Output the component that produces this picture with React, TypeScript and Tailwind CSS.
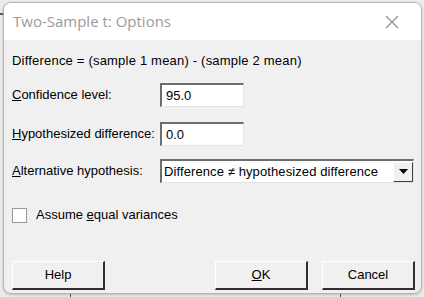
import React from "react";

const font = { fontFamily: '"Liberation Sans", Arial, sans-serif' };

function Btn({ children }: { children: React.ReactNode }) {
  return (
    <button className="w-[93px] h-[29px] bg-[#f0f0f0] border-t border-l border-t-white border-l-white border-r-2 border-b-2 border-r-[#303030] border-b-[#303030] text-[13px] text-black flex items-center justify-center">
      {children}
    </button>
  );
}

function Field({ value, w }: { value: string; w: string }) {
  return (
    <div className={`${w} h-[24px] bg-white border-t-2 border-l-2 border-t-[#6d6d6d] border-l-[#6d6d6d] border-b border-r border-b-[#e3e3e3] border-r-[#e3e3e3] flex items-center pl-[4px] text-[13px] text-black`}>
      {value}
    </div>
  );
}

export default function App() {
  return (
    <div className="relative w-[424px] h-[297px] bg-[#ececec] overflow-hidden pl-[3px] pt-[2px]" style={font}>
      <div className="absolute left-0 top-[13px] w-[4px] h-[2px] bg-[#5a5a5a]" />
      <div className="absolute left-[70px] top-[294px] w-[1px] h-[3px] bg-[#5a5a5a]" />
      <div className="absolute left-[340px] top-[294px] w-[1px] h-[3px] bg-[#5a5a5a]" />
      <div className="relative w-[419px] h-[292px] rounded-[8px] border border-[#b4b4b4] bg-[#f0f0f0] overflow-hidden shadow-[0_1px_3px_rgba(0,0,0,0.2)] flex flex-col">
        <div className="h-[37px] bg-white flex items-center justify-between pl-[9px] pr-[22px] shrink-0">
          <span className="text-[15px] text-[#9b9b9b]" style={{ fontFamily: '"Open Sans", "Noto Sans", sans-serif' }}>
            Two-Sample t: Options
          </span>
          <svg width="14" height="14" viewBox="0 0 14 14">
            <path d="M1 1 L13 13 M13 1 L1 13" stroke="#8a8a8a" strokeWidth="1.1" fill="none" />
          </svg>
        </div>
        <div className="flex-1 flex flex-col pl-[8px] pr-[6px] text-[13px] text-black">
          <div className="mt-[13px] h-[16px] flex items-center tracking-[0.2px]">Difference = (sample 1 mean) - (sample 2 mean)</div>
          <div className="mt-[14px] flex items-center">
            <span className="w-[148px]"><u>C</u>onfidence level:</span>
            <Field value="95.0" w="w-[84px]" />
          </div>
          <div className="mt-[15px] flex items-center">
            <span className="w-[148px]"><u>H</u>ypothesized difference:</span>
            <Field value="0.0" w="w-[84px]" />
          </div>
          <div className="mt-[13px] flex items-center">
            <span className="w-[148px]"><u>A</u>lternative hypothesis:</span>
            <div className="w-[254px] h-[24px] bg-white border-t-2 border-l-2 border-t-[#6d6d6d] border-l-[#6d6d6d] border-b border-r border-b-[#e3e3e3] border-r-[#e3e3e3] flex items-center justify-between pl-[2px]">
              <span className="tracking-[0.1px]">Difference ≠ hypothesized difference</span>
              <div className="w-[20px] h-[20px] bg-[#f0f0f0] border-t border-l border-t-white border-l-white border-r border-b border-r-[#404040] border-b-[#404040] flex items-center justify-center">
                <svg width="9" height="5" viewBox="0 0 9 5"><path d="M0 0 H9 L4.5 5 Z" fill="#000" /></svg>
              </div>
            </div>
          </div>
          <div className="mt-[22px] flex items-center">
            <div className="w-[15px] h-[15px] bg-white border border-[#9a9a9a] mt-[1px]" />
            <span className="ml-[9px]">Assume <u>e</u>qual variances</span>
          </div>
          <div className="mt-[36px] flex items-center">
            <Btn>Help</Btn>
            <div className="flex-1" />
            <Btn><span><u>O</u>K</span></Btn>
            <div className="w-[14px]" />
            <Btn>Cancel</Btn>
          </div>
        </div>
      </div>
    </div>
  );
}
